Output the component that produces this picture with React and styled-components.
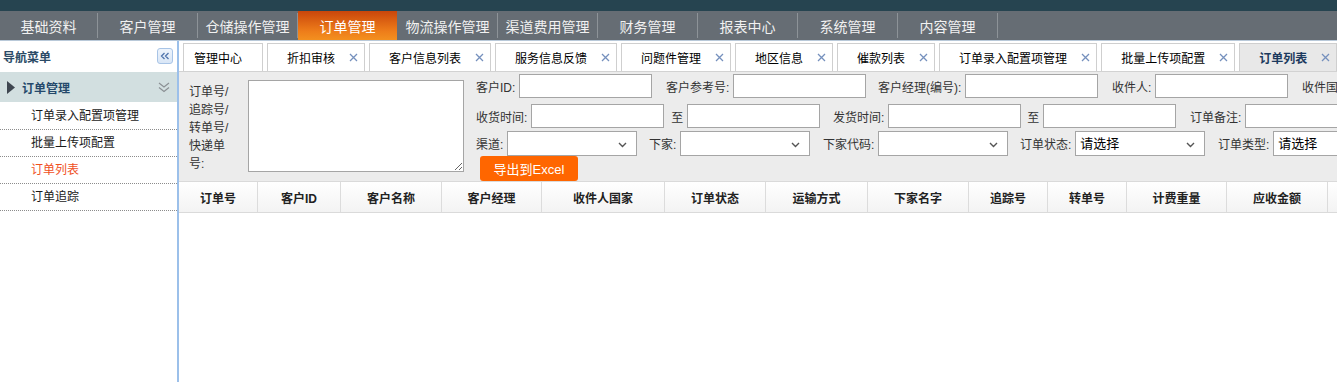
import styled, { createGlobalStyle } from "styled-components"

const GlobalStyle = createGlobalStyle`
  html, body {
    margin: 0;
    padding: 0;
  }
  body {
    font-family: "Liberation Sans", "Noto Sans CJK SC", sans-serif;
    font-size: 12px;
    color: #333;
    background: #fff;
    overflow: hidden;
  }
`

const Page = styled.div`
  width: 1337px;
  height: 382px;
  display: flex;
  flex-direction: column;
  overflow: hidden;
`

const TopStrip = styled.div`
  height: 11px;
  background: #264450;
`

const NavBar = styled.nav`
  height: 29px;
  background: #666d74;
  display: flex;
  border-bottom: 1px solid #b9c9d9;
`

const NavItem = styled.div`
  position: relative;
  flex: 0 0 ${({ $first }) => ($first ? 97 : 99)}px;
  margin-right: 1px;
  display: flex;
  align-items: center;
  justify-content: center;
  font-size: 14px;
  color: ${({ $active }) => ($active ? "#fff" : "#f1f1f1")};
  background: ${({ $active }) =>
    $active ? "linear-gradient(#c9460b, #ee7d1a 70%, #f3901f)" : "transparent"};

  &::after {
    content: "";
    position: absolute;
    right: -1px;
    top: 2px;
    bottom: 2px;
    width: 1px;
    background: ${({ $active }) => ($active ? "transparent" : "#8d9398")};
  }
`

const Body = styled.div`
  flex: 1;
  display: flex;
  min-height: 0;
`

const Sidebar = styled.aside`
  flex: 0 0 177px;
  border-right: 2px solid #9cc0ea;
  background: #fff;
  display: flex;
  flex-direction: column;
`

const SideHeader = styled.div`
  height: 31px;
  display: flex;
  align-items: center;
  justify-content: space-between;
  padding: 0 4px 0 3px;
  font-weight: bold;
  color: #2b4a66;
`

const CollapseBtn = styled.div`
  width: 16px;
  height: 16px;
  box-sizing: border-box;
  border: 1px solid #a8c4e6;
  border-radius: 3px;
  background: linear-gradient(#eef4fc, #d9e6f6);
  display: flex;
  align-items: center;
  justify-content: center;
  margin-top: -1px;
`

const GroupHeader = styled.div`
  height: 30px;
  background: #d2dfe0;
  display: flex;
  align-items: center;
  padding: 0 7px;
  font-weight: bold;
  font-size: 12px;
  color: #25496b;

  span {
    flex: 1;
    margin-left: 7px;
  }
`

const MenuList = styled.ul`
  list-style: none;
  margin: 1px 0 0;
  padding: 0;
`

const MenuItem = styled.li`
  height: 26px;
  line-height: 26px;
  padding-left: 31px;
  border-bottom: 1px dotted #8c8c8c;
  color: ${({ $active }) => ($active ? "#f0501e" : "#1a1a1a")};
`

const Main = styled.main`
  flex: 1;
  min-width: 0;
  display: flex;
  flex-direction: column;
  overflow: hidden;
`

const TabStrip = styled.div`
  height: 30px;
  box-sizing: border-box;
  padding: 2px 0 0 4px;
  display: flex;
  gap: 4px;
  white-space: nowrap;
  background: #fff;
`

const Tab = styled.div`
  flex: 0 0 auto;
  height: 28px;
  box-sizing: border-box;
  border: 1px solid #cfcfcf;
  border-bottom: none;
  display: flex;
  align-items: center;
  padding: ${({ $closable }) => ($closable ? "0 6px 0 19px" : "0 20px 0 10px")};
  background: ${({ $active }) => ($active ? "#e8e8e8" : "#fff")};
  color: ${({ $active }) => ($active ? "#1c3a5e" : "#000")};
  font-weight: ${({ $active }) => ($active ? "bold" : "normal")};

  svg {
    margin-left: 14px;
  }
`

const FormArea = styled.div`
  height: 110px;
  box-sizing: border-box;
  border-top: 1px solid #d2d2d2;
  background: #ececec;
  display: flex;
  padding-left: 10px;
  white-space: nowrap;
`

const BigLabel = styled.div`
  flex: 0 0 46px;
  margin: 11px 13px 0 0;
  line-height: 18px;
  white-space: normal;
  color: #333;
`

const BigText = styled.textarea`
  flex: 0 0 216px;
  height: 92px;
  margin-top: 8px;
  box-sizing: border-box;
  border: 1px solid #a5a5a5;
  background: #fff;
  resize: both;
  font: inherit;
`

const Fields = styled.div`
  margin-left: 12px;
  padding-top: 2px;
  display: flex;
  flex-direction: column;
`

const Row = styled.div`
  display: flex;
  align-items: center;
  height: ${({ $h }) => $h}px;
  margin-bottom: ${({ $mb }) => $mb}px;
`

const Label = styled.label`
  flex: 0 0 ${({ $w }) => $w}px;
  box-sizing: border-box;
  padding-right: 4px;
  text-align: right;
  color: #333;
  white-space: nowrap;
`

const TextInput = styled.div`
  flex: 0 0 133px;
  height: 24px;
  box-sizing: border-box;
  border: 1px solid #a5a5a5;
  background: #fff;
`

const Select = styled.div`
  position: relative;
  flex: 0 0 130px;
  height: 25px;
  box-sizing: border-box;
  border: 1px solid #a5a5a5;
  background: #fff;
  padding-left: 4px;
  font-size: 13px;
  line-height: 23px;
  color: #000;

  svg {
    position: absolute;
    right: 9px;
    top: 10px;
  }
`

const ExportButton = styled.button`
  margin-left: 4px;
  width: 98px;
  height: 25px;
  border: none;
  border-radius: 3px;
  background: #ff6600;
  color: #fff;
  font-family: inherit;
  font-size: 13px;
  padding: 0;
`

const HeaderRow = styled.div`
  display: flex;
  height: 32px;
  box-sizing: border-box;
  border-top: 1px solid #dadada;
  border-bottom: 1px solid #dadada;
  background: linear-gradient(#ffffff, #f3f3f3);
  white-space: nowrap;
`

const HeadCell = styled.div`
  flex: 0 0 ${({ $w }) => $w}px;
  box-sizing: border-box;
  border-right: 1px solid #dcdcdc;
  display: flex;
  align-items: center;
  justify-content: center;
  font-weight: bold;
  color: #222;
`

const Blank = styled.div`
  flex: 1;
  background: #fff;
`

const CloseIcon = () => (
  <svg width="9" height="9" viewBox="0 0 9 9">
    <path d="M1 1L8 8M8 1L1 8" stroke="#7590bd" strokeWidth="1.3" fill="none" />
  </svg>
)

const Chevron = () => (
  <svg width="9" height="6" viewBox="0 0 9 6">
    <path d="M1 1L4.5 4.5L8 1" stroke="#555" strokeWidth="1.4" fill="none" />
  </svg>
)

const navItems = [
  "基础资料",
  "客户管理",
  "仓储操作管理",
  "订单管理",
  "物流操作管理",
  "渠道费用管理",
  "财务管理",
  "报表中心",
  "系统管理",
  "内容管理",
]

const tabs = [
  { title: "管理中心" },
  { title: "折扣审核", closable: true },
  { title: "客户信息列表", closable: true },
  { title: "服务信息反馈", closable: true },
  { title: "问题件管理", closable: true },
  { title: "地区信息", closable: true },
  { title: "催款列表", closable: true },
  { title: "订单录入配置项管理", closable: true },
  { title: "批量上传项配置", closable: true },
  { title: "订单列表", closable: true, active: true },
]

const menu = ["订单录入配置项管理", "批量上传项配置", "订单列表", "订单追踪"]

const row1 = [
  ["客户ID:", 43],
  ["客户参考号:", 81],
  ["客户经理(编号):", 99],
  ["收件人:", 57],
  ["收件国家:", 69],
]

const row2 = [
  ["收货时间:", 54],
  ["至", 23],
  ["发货时间:", 68],
  ["至", 22],
  ["订单备注:", 69],
]

const row3 = [
  ["渠道:", 30, ""],
  ["下家:", 43, ""],
  ["下家代码:", 68, ""],
  ["订单状态:", 67, "请选择"],
  ["订单类型:", 68, "请选择"],
]

const columns = [
  ["订单号", 79],
  ["客户ID", 83],
  ["客户名称", 101],
  ["客户经理", 100],
  ["收件人国家", 123],
  ["订单状态", 101],
  ["运输方式", 102],
  ["下家名字", 101],
  ["追踪号", 79],
  ["转单号", 79],
  ["计费重量", 100],
  ["应收金额", 101],
  ["", 100],
]

const Field = ({ label, w, select, value }) => (
  <>
    <Label $w={w}>{label}</Label>
    {select ? (
      <Select>
        {value}
        <Chevron />
      </Select>
    ) : (
      <TextInput />
    )}
  </>
)

const App = () => {
  return (
    <>
      <GlobalStyle />
      <Page>
        <TopStrip />
        <NavBar>
          {navItems.map((n, i) => (
            <NavItem key={n} $first={i === 0} $active={n === "订单管理"}>
              {n}
            </NavItem>
          ))}
        </NavBar>
        <Body>
          <Sidebar>
            <SideHeader>
              导航菜单
              <CollapseBtn>
                <svg width="10" height="8" viewBox="0 0 10 8">
                  <path
                    d="M4.5 1L1.5 4L4.5 7M8.5 1L5.5 4L8.5 7"
                    stroke="#4f74ad"
                    strokeWidth="1.3"
                    fill="none"
                  />
                </svg>
              </CollapseBtn>
            </SideHeader>
            <GroupHeader>
              <svg width="8" height="13" viewBox="0 0 8 13">
                <path d="M0 0L8 6.5L0 13Z" fill="#3e4650" />
              </svg>
              <span>订单管理</span>
              <svg width="12" height="11" viewBox="0 0 12 11">
                <path
                  d="M1 1L6 5L11 1M1 5.5L6 9.5L11 5.5"
                  stroke="#8b9094"
                  strokeWidth="1.2"
                  fill="none"
                />
              </svg>
            </GroupHeader>
            <MenuList>
              {menu.map((m) => (
                <MenuItem key={m} $active={m === "订单列表"}>
                  {m}
                </MenuItem>
              ))}
            </MenuList>
          </Sidebar>
          <Main>
            <TabStrip>
              {tabs.map((t) => (
                <Tab key={t.title} $closable={t.closable} $active={t.active}>
                  {t.title}
                  {t.closable && <CloseIcon />}
                </Tab>
              ))}
            </TabStrip>
            <FormArea>
              <BigLabel>订单号/追踪号/转单号/快递单号:</BigLabel>
              <BigText />
              <Fields>
                <Row $h={24} $mb={6}>
                  {row1.map(([l, w]) => (
                    <Field key={l} label={l} w={w} />
                  ))}
                </Row>
                <Row $h={24} $mb={3}>
                  {row2.map(([l, w], i) => (
                    <Field key={l + i} label={l} w={w} />
                  ))}
                </Row>
                <Row $h={25} $mb={0}>
                  {row3.map(([l, w, v]) => (
                    <Field key={l} label={l} w={w} select value={v} />
                  ))}
                </Row>
                <Row $h={25} $mb={0}>
                  <ExportButton>导出到Excel</ExportButton>
                </Row>
              </Fields>
            </FormArea>
            <HeaderRow>
              {columns.map(([c, w], i) => (
                <HeadCell key={i} $w={w}>
                  {c}
                </HeadCell>
              ))}
            </HeaderRow>
            <Blank />
          </Main>
        </Body>
      </Page>
    </>
  )
}

export default App
